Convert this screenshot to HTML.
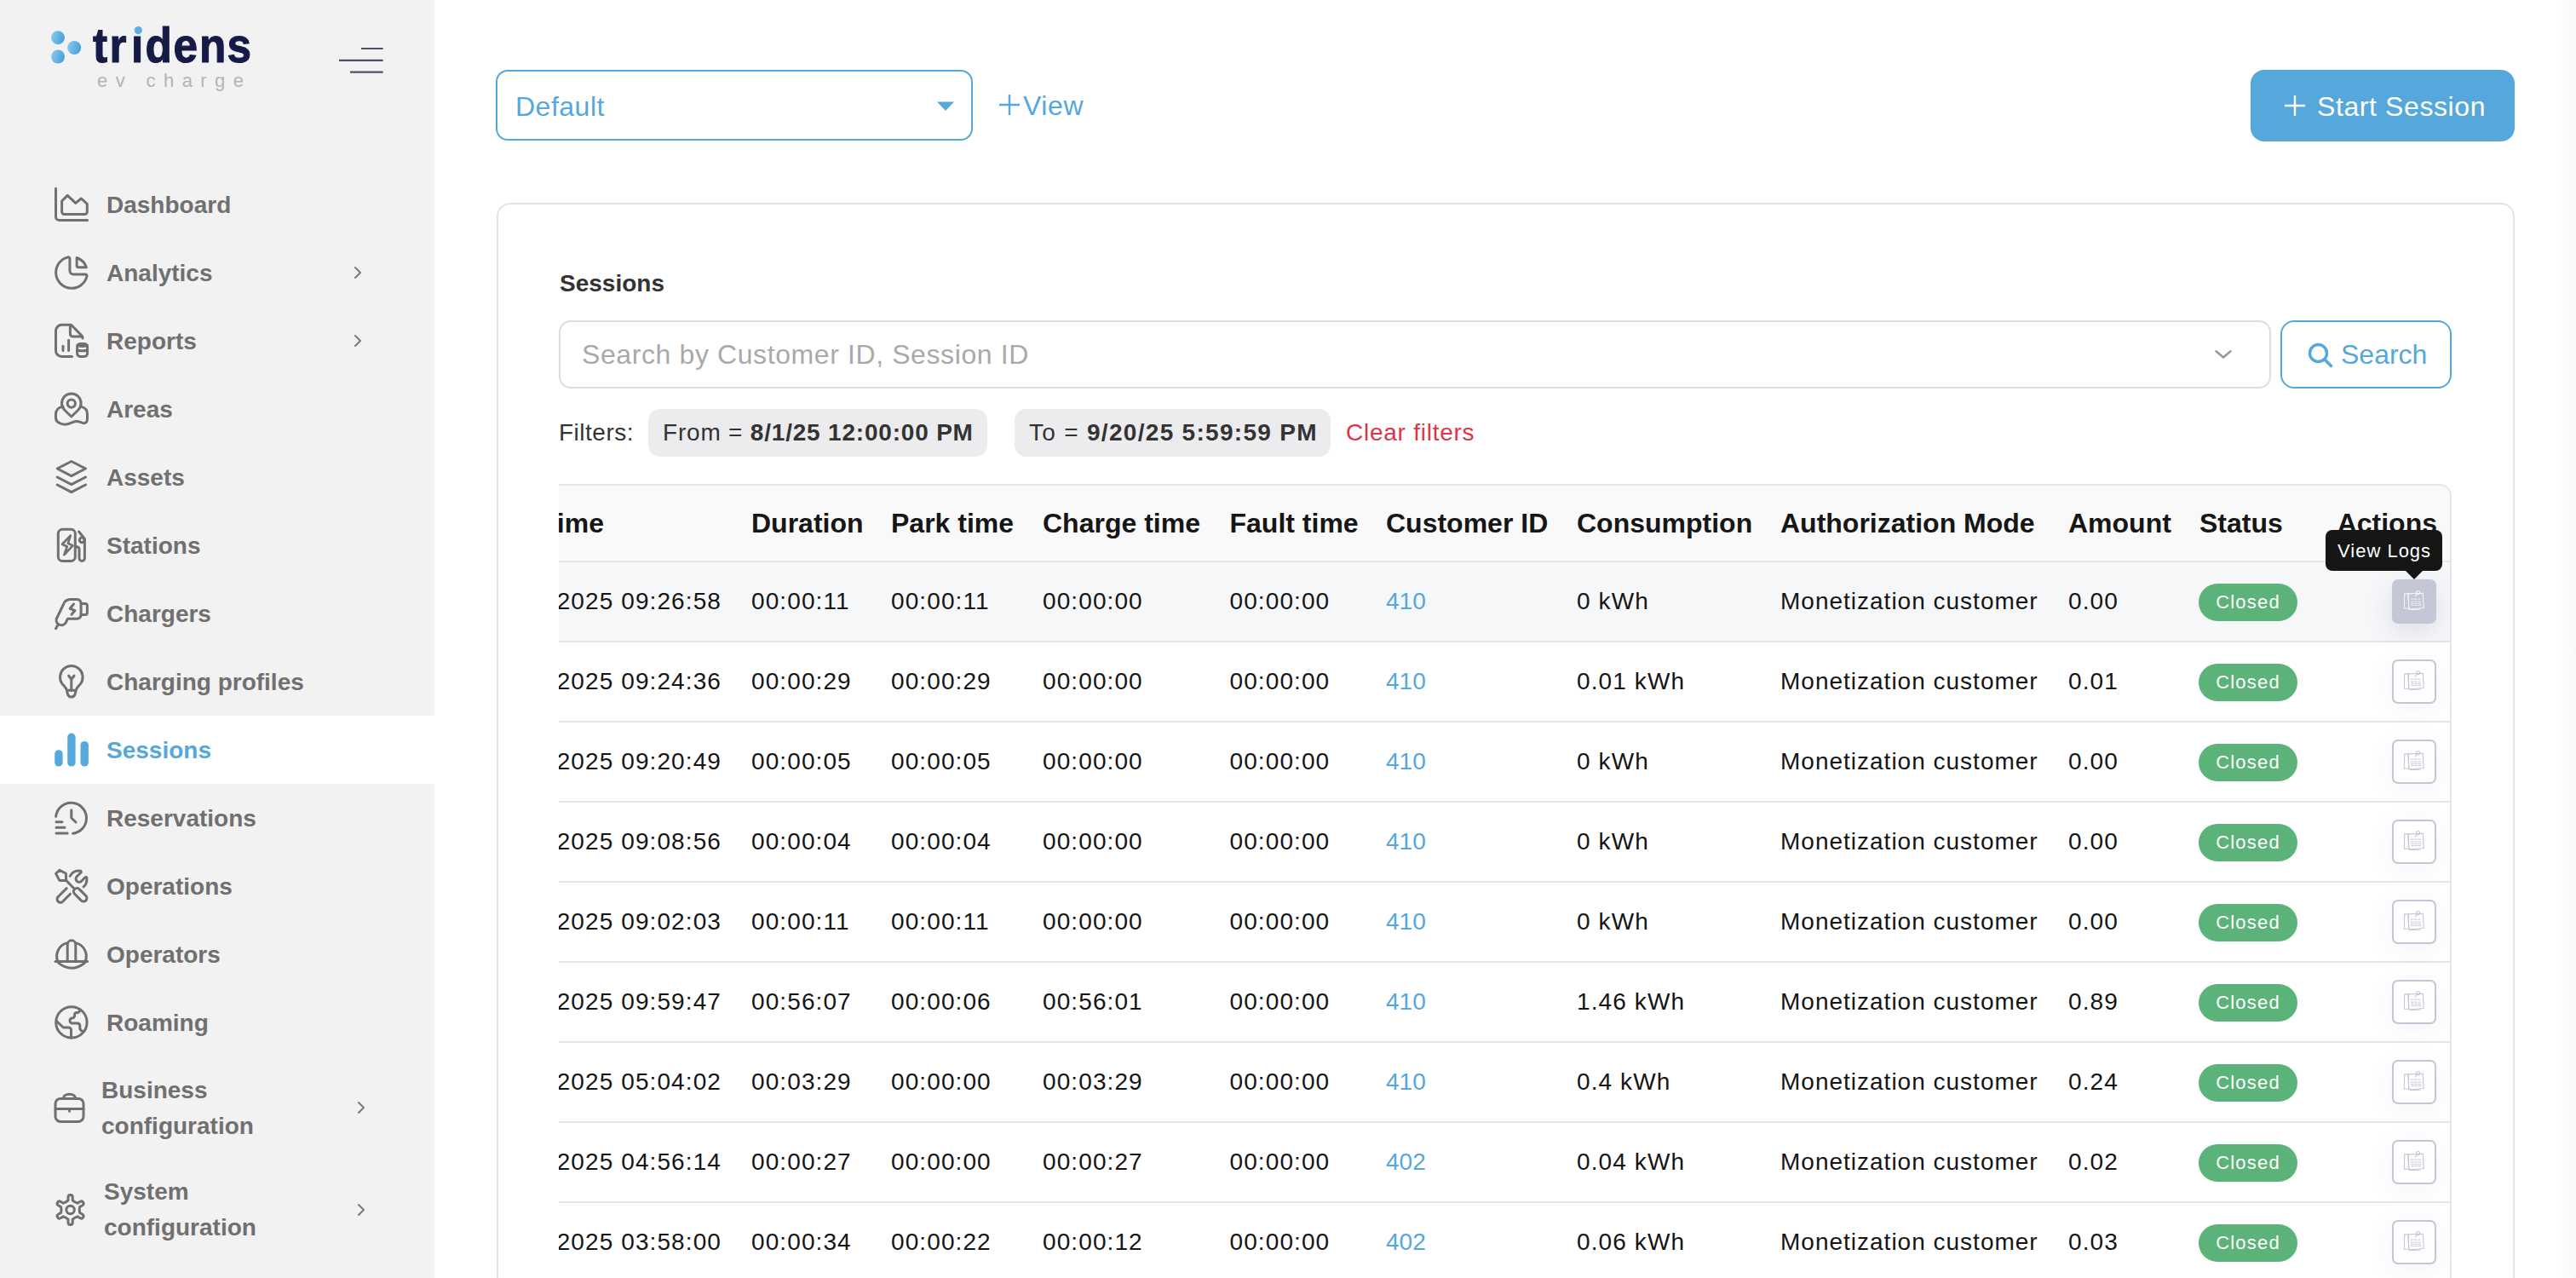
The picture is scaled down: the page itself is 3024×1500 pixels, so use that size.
<!DOCTYPE html><html><head><meta charset="utf-8"><title>Sessions</title><style>
*{margin:0;padding:0;box-sizing:border-box}
html,body{width:3024px;height:1500px;overflow:hidden;background:#fff;font-family:"Liberation Sans", sans-serif}
.t{position:absolute;line-height:1;white-space:nowrap}
.abs{position:absolute}
#side{position:absolute;left:0;top:0;width:510px;height:1500px;background:#f2f2f2}
.nav{color:#707070;font-weight:bold}
.ico{position:absolute;width:48px;height:48px;overflow:visible}
.ico *{fill:none;stroke:#707070;stroke-width:3;stroke-linecap:round;stroke-linejoin:round}
.chev{position:absolute;width:14px;height:20px}
.chev path{fill:none;stroke:#7a7a7a;stroke-width:2;stroke-linecap:round;stroke-linejoin:round}
.row{position:absolute;left:0;width:2221px;height:94px;border-bottom:2px solid #e6e6e9}
.cell{color:#151515;letter-spacing:1.1px}
.badge{position:absolute;width:116px;height:44px;border-radius:22px;background:#5cb37a;color:#fff;font-size:22px;letter-spacing:1.2px;line-height:44px;text-align:center}
.abtn{position:absolute;width:52px;height:52px;border:2px solid #c4c5d7;border-radius:7px;background:#fff;box-shadow:0 6px 30px rgba(60,60,110,0.06)}
</style></head><body>
<div id="side">
<div class="abs" style="left:0;top:840px;width:510px;height:80px;background:#fff"></div>
<svg class="abs" style="left:0;top:0" width="510" height="130" viewBox="0 0 510 130">
<defs><linearGradient id="lg" x1="0" y1="0" x2="1" y2="0.3"><stop offset="0" stop-color="#8fcdf0"/><stop offset="1" stop-color="#4aa2dc"/></linearGradient></defs>
<circle cx="68" cy="44.2" r="8" fill="url(#lg)"/>
<circle cx="87.2" cy="56" r="8" fill="url(#lg)"/>
<circle cx="68" cy="66.5" r="8" fill="url(#lg)"/>
<g transform="scale(0.9,1)"><text x="121.1 142.8 171.1 189.4 226.1 260.0 296.1" y="73.2" font-family="Liberation Sans" font-weight="bold" font-size="57" fill="#151a46" stroke="#151a46" stroke-width="1.1">trıdens</text></g>
<circle id="idot" cx="162.3" cy="35.6" r="4.6" fill="#5ab0e4"/>
<text x="114" y="101.7" font-family="Liberation Sans" font-size="22" textLength="172" lengthAdjust="spacing" fill="#b4b4b4">ev  charge</text>
<path d="M424 57H449.6M398 70.8H449.6M411 84.6H449.6" stroke="#4b5069" stroke-width="2.2" fill="none"/>
</svg>
<svg class="ico" style="left:60px;top:216px" viewBox="0 0 48 48"><path d="M5.5 5.3V38.4a4 4 0 0 0 4 4H42.6"/><path d="M12.6 20L19.2 13.4L28.8 22.4L35.4 17L42.3 23.4V32.6a3 3 0 0 1 -3 3H15.6a3 3 0 0 1 -3 -3Z"/></svg>
<div class="t" style="left:125.0px;top:226.9px;font-size:28px;color:#707070;font-weight:bold">Dashboard</div>
<svg class="ico" style="left:60px;top:296px" viewBox="0 0 48 48"><g transform="translate(-0.6,-0.7) scale(2.05)"><path d="M10 3.2a9 9 0 1 0 10.8 10.8a1 1 0 0 0 -1 -1h-6.8a2 2 0 0 1 -2 -2v-7a.9 .9 0 0 0 -1 -.8" style="stroke-width:1.46"/><path d="M15 3.5a9 9 0 0 1 5.5 5.5h-4.5a1 1 0 0 1 -1 -1v-4.5" style="stroke-width:1.46"/></g></svg>
<div class="t" style="left:125.0px;top:306.9px;font-size:28px;color:#707070;font-weight:bold">Analytics</div>
<svg class="chev" style="left:413px;top:310px" viewBox="0 0 14 20"><path d="M4 4L10 10L4 16"/></svg>
<svg class="ico" style="left:60px;top:376px" viewBox="0 0 48 48"><path d="M24.5 42.4H12.5a7 7 0 0 1 -7 -7V12.3a7 7 0 0 1 7 -7H23.5L36 18a4 4 0 0 1 1 3"/><path d="M22.4 5.6V16a3 3 0 0 0 3 3H36"/><path d="M14 30.2V35.6M20.6 23.2V35.6"/><rect x="30.6" y="27.6" width="12" height="14.8" rx="3.6"/><path d="M30.8 29.4Q36.6 31.6 42.4 29.4M30.6 35Q36.6 36.6 42.6 35"/></svg>
<div class="t" style="left:125.0px;top:386.9px;font-size:28px;color:#707070;font-weight:bold">Reports</div>
<svg class="chev" style="left:413px;top:390px" viewBox="0 0 14 20"><path d="M4 4L10 10L4 16"/></svg>
<svg class="ico" style="left:60px;top:456px" viewBox="0 0 48 48"><circle cx="23.8" cy="17.6" r="4.6"/><path d="M23.8 33L15.8 25.2A11.3 11.3 0 1 1 31.8 25.2Z"/><path d="M14 21.2C8 22 5.5 26 5.5 30V34.5c0 5 6 8 12 7.6c5 -0.5 8 -3.5 12 -3.6c4.5 -0.1 6.5 2.8 10 2.1c2.5 -0.5 3 -3 3 -5.8V30c0 -4 -2.5 -7.5 -7 -8.6"/></svg>
<div class="t" style="left:125.0px;top:466.9px;font-size:28px;color:#707070;font-weight:bold">Areas</div>
<svg class="ico" style="left:60px;top:536px" viewBox="0 0 48 48"><path d="M23.8 5.5L7.2 14L23.8 22.6L40.5 14Z"/><path d="M7.2 24L23.8 32.6L40.5 24"/><path d="M7.2 33L23.8 41.6L40.5 33"/></svg>
<div class="t" style="left:125.0px;top:546.9px;font-size:28px;color:#707070;font-weight:bold">Assets</div>
<svg class="ico" style="left:60px;top:616px" viewBox="0 0 48 48"><rect x="8.3" y="5.3" width="20" height="37.1" rx="5"/><path d="M22.8 12.6L13 22.8L18.8 25.4L15.4 35.2L25.4 24.4L19.8 21.8Z" style="stroke-width:2.7"/><path d="M28.3 25.8H30a3 3 0 0 1 3 3V39.2a3.2 3.2 0 0 0 6.4 0V16.5L32.6 8"/><circle cx="36.2" cy="17.8" r="2.9"/></svg>
<div class="t" style="left:125.0px;top:626.9px;font-size:28px;color:#707070;font-weight:bold">Stations</div>
<svg class="ico" style="left:60px;top:696px" viewBox="0 0 48 48"><path d="M22.6 7.6H30.6a4.5 4.5 0 0 1 4.5 4.5V25.6a4.6 4.6 0 0 1 -4.6 4.6H19.5L17.4 34.5a6 6 0 0 1 -11.2 -4L14.2 14a9 9 0 0 1 8.4 -6.4Z"/><path d="M8 37.2L5.5 41.8"/><path d="M35.1 12.4H40a2.4 2.4 0 0 1 2.4 2.4V23a2.4 2.4 0 0 1 -2.4 2.4H35.1"/><path d="M26.5 13L22.2 18.3L28 20.6L24 25.2"/></svg>
<div class="t" style="left:125.0px;top:706.9px;font-size:28px;color:#707070;font-weight:bold">Chargers</div>
<svg class="ico" style="left:60px;top:776px" viewBox="0 0 48 48"><path d="M18.4 34.2C17.6 31 15 29 13 26.6A13.3 13.3 0 1 1 34.6 26.6C32.6 29 30 31 29.2 34.2Z"/><path d="M18.6 35.4L19.6 39a4.4 4.4 0 0 0 8.4 0L29 35.4"/><path d="M20.6 17.2L23.8 21.2L27 17.2M23.8 21.2V34.2"/></svg>
<div class="t" style="left:125.0px;top:786.9px;font-size:28px;color:#707070;font-weight:bold">Charging profiles</div>
<svg class="abs" width="48" height="48" style="left:60px;top:856px" viewBox="0 0 48 48"><rect x="4.2" y="24.2" width="9.4" height="19.4" rx="4.7" fill="#55a9dc"/><rect x="19.2" y="4.5" width="9.4" height="39.1" rx="4.7" fill="#55a9dc"/><rect x="34.5" y="13.9" width="9.4" height="29.7" rx="4.7" fill="#55a9dc"/></svg>
<div class="t" style="left:125.0px;top:866.9px;font-size:28px;color:#55a7dc;font-weight:bold">Sessions</div>
<svg class="ico" style="left:60px;top:936px" viewBox="0 0 48 48"><path d="M5.6 22.2A18 18 0 1 1 25.6 42.2"/><path d="M23.8 14.8V24L29 29"/><path d="M6 28.7H13M6 35.3H16M6 42H19.2"/></svg>
<div class="t" style="left:125.0px;top:946.9px;font-size:28px;color:#707070;font-weight:bold">Reservations</div>
<svg class="ico" style="left:60px;top:1016px" viewBox="0 0 48 48"><path d="M17.6 17.4L9.8 17.4L5.6 9.4L9.9 5.2L17.4 9.2Z"/><path d="M17.6 17.4L26.4 26.2"/><path d="M27.6 27.6a3.7 3.7 0 0 1 5.2 -0.2L41 35.6a3.9 3.9 0 0 1 -5.5 5.5L27.4 33a3.7 3.7 0 0 1 0.2 -5.4Z"/><path d="M22.2 12.2C25 7.5 30 5.5 34.6 6.2c1 .4 .8 1.4 .2 2l-4.6 4.6a3.8 3.8 0 0 0 5.4 5.4l4.4 -4.4c.6 -.6 1.6 -.5 1.8 .4c.6 4.5 -1.2 8.5 -3.8 10.6"/><path d="M18.2 26.6L8 36.8a3.9 3.9 0 0 0 5.5 5.5L22.5 33.2"/></svg>
<div class="t" style="left:125.0px;top:1026.9px;font-size:28px;color:#707070;font-weight:bold">Operations</div>
<svg class="ico" style="left:60px;top:1096px" viewBox="0 0 48 48"><path d="M5 32.6H42.6"/><path d="M7.6 32A16.2 16.2 0 0 1 19.2 10.6M28.6 10.6A16.2 16.2 0 0 1 40.3 32"/><path d="M19.2 32.4V12.6a4.8 4.8 0 0 1 9.6 0V32.4"/><path d="M8.6 34.2Q23.8 46.4 39.4 34.2"/></svg>
<div class="t" style="left:125.0px;top:1106.9px;font-size:28px;color:#707070;font-weight:bold">Operators</div>
<svg class="ico" style="left:60px;top:1176px" viewBox="0 0 48 48"><circle cx="23.9" cy="23.9" r="18.2"/><path d="M6.2 22.4L14.3 30H20.5a3 3 0 0 1 3 3V42"/><path d="M34.6 9.2L33 11.4a3 3 0 0 1 -2.4 1H30.2a2.6 2.6 0 0 0 -2.6 2.6V16a3.2 3.2 0 0 1 -3 3a3 3 0 0 0 -2.6 3a3 3 0 0 0 3 3H31a3 3 0 0 1 2.8 2.8V31a5 5 0 0 0 3.8 3.6"/></svg>
<div class="t" style="left:125.0px;top:1186.9px;font-size:28px;color:#707070;font-weight:bold">Roaming</div>
<svg class="ico" style="left:60px;top:1276px" viewBox="0 0 48 48"><rect x="5" y="13.4" width="33" height="27" rx="6"/><path d="M14 13.2a7.6 6 0 0 1 15 0"/><path d="M5 25.5H38M21.5 25.5V28.2"/></svg>
<div class="t" style="left:119.0px;top:1265.8px;font-size:28px;color:#707070;font-weight:bold">Business</div>
<div class="t" style="left:119.0px;top:1308.1px;font-size:28px;color:#707070;font-weight:bold">configuration</div>
<svg class="chev" style="left:417px;top:1290px" viewBox="0 0 14 20"><path d="M4 4L10 10L4 16"/></svg>
<svg class="ico" style="left:60px;top:1396px" viewBox="0 0 48 48"><path d="M20.00 12.80L20.00 9.10A2.6 2.6 0 0 1 25.20 9.10L25.20 12.80Q27.70 15.17 31.00 16.15L34.20 14.30A2.6 2.6 0 0 1 36.80 18.80L33.60 20.65Q32.80 24.00 33.60 27.35L36.80 29.20A2.6 2.6 0 0 1 34.20 33.70L31.00 31.85Q27.70 32.83 25.20 35.20L25.20 38.90A2.6 2.6 0 0 1 20.00 38.90L20.00 35.20Q17.50 32.83 14.20 31.85L11.00 33.70A2.6 2.6 0 0 1 8.40 29.20L11.60 27.35Q12.40 24.00 11.60 20.65L8.40 18.80A2.6 2.6 0 0 1 11.00 14.30L14.20 16.15Q17.50 15.17 20.00 12.80Z"/><circle cx="22.6" cy="24" r="4.7"/></svg>
<div class="t" style="left:122.0px;top:1385.1px;font-size:28px;color:#707070;font-weight:bold">System</div>
<div class="t" style="left:122.0px;top:1427.0px;font-size:28px;color:#707070;font-weight:bold">configuration</div>
<svg class="chev" style="left:417px;top:1410px" viewBox="0 0 14 20"><path d="M4 4L10 10L4 16"/></svg>
</div>
<div class="abs" style="left:582px;top:82px;width:560px;height:83px;border:2px solid #55a7dc;border-radius:14px"></div>
<div class="t" style="left:605.0px;top:108.9px;font-size:32px;color:#55a7dc;letter-spacing:0.5px">Default</div>
<svg class="abs" style="left:1098px;top:117px" width="24" height="16" viewBox="0 0 24 16"><path d="M2 2.5H22L12 13Z" fill="#55a7dc"/></svg>
<svg class="abs" style="left:1170px;top:108px" width="30" height="30" viewBox="0 0 30 30"><path d="M15 3V27M3 15H27" stroke="#55a7dc" stroke-width="2.4" fill="none"/></svg>
<div class="t" style="left:1201.0px;top:107.9px;font-size:32px;color:#55a7dc;letter-spacing:0.6px">View</div>
<div class="abs" style="left:2642px;top:82px;width:310px;height:84px;background:#55a7dc;border-radius:16px"></div>
<svg class="abs" style="left:2679px;top:109px" width="30" height="30" viewBox="0 0 30 30"><path d="M15 3V27M3 15H27" stroke="#fff" stroke-width="2.4" fill="none"/></svg>
<div class="t" style="left:2720.0px;top:108.6px;font-size:32px;color:#fff;letter-spacing:0.6px">Start Session</div>
<div class="abs" style="left:583px;top:238px;width:2369px;height:1400px;border:2px solid #e4e4e7;border-radius:16px"></div>
<div class="t" style="left:657.0px;top:318.7px;font-size:28px;color:#333;font-weight:bold">Sessions</div>
<div class="abs" style="left:656px;top:376px;width:2010px;height:80px;border:2px solid #dedede;border-radius:14px"></div>
<div class="t" style="left:683.0px;top:399.9px;font-size:32px;color:#a9a9a9;letter-spacing:0.6px">Search by Customer ID, Session ID</div>
<svg class="abs" style="left:2596px;top:406px" width="28" height="20" viewBox="0 0 28 20"><path d="M5.5 6.3L14 13.6L22.5 6.3" stroke="#9a9a9a" stroke-width="2.6" fill="none" stroke-linecap="round" stroke-linejoin="round"/></svg>
<div class="abs" style="left:2677px;top:376px;width:201px;height:80px;border:2px solid #55a7dc;border-radius:16px"></div>
<svg class="abs" style="left:2706px;top:399px" width="36" height="36" viewBox="0 0 36 36"><circle cx="15.5" cy="15.5" r="10" stroke="#55a7dc" stroke-width="3.4" fill="none"/><path d="M23 23L30.5 30.5" stroke="#55a7dc" stroke-width="3.6" stroke-linecap="round"/></svg>
<div class="t" style="left:2748.0px;top:399.9px;font-size:32px;color:#55a7dc">Search</div>
<div class="t" style="left:656.0px;top:494.3px;font-size:28px;color:#333;letter-spacing:0.5px">Filters:</div>
<div class="abs" style="left:761px;top:480px;width:398px;height:56px;background:#ececee;border-radius:14px"></div>
<div class="t" style="left:778.0px;top:494.3px;font-size:28px;color:#333;letter-spacing:0.8px">From = <b>8/1/25 12:00:00 PM</b></div>
<div class="abs" style="left:1191px;top:480px;width:371px;height:56px;background:#ececee;border-radius:14px"></div>
<div class="t" style="left:1208.0px;top:494.3px;font-size:28px;color:#333;letter-spacing:1.3px">To = <b>9/20/25 5:59:59 PM</b></div>
<div class="t" style="left:1580.0px;top:494.3px;font-size:28px;color:#dc3545;letter-spacing:0.75px">Clear filters</div>
<div class="abs" style="left:656px;top:568px;width:2222px;height:940px;overflow:hidden;border-top:2px solid #e6e6e9;border-right:2px solid #e6e6e9;border-top-right-radius:14px">
<div class="abs" style="left:0;top:0;width:2221px;height:90px;background:#f9f9fa;border-bottom:2px solid #e6e6e9"></div>
<div class="t" style="right:2167.0px;top:27.9px;font-size:32px;color:#161616;font-weight:bold">Start time</div>
<div class="t" style="left:226.0px;top:27.9px;font-size:32px;color:#161616;font-weight:bold">Duration</div>
<div class="t" style="left:390.0px;top:27.9px;font-size:32px;color:#161616;font-weight:bold">Park time</div>
<div class="t" style="left:568.0px;top:27.9px;font-size:32px;color:#161616;font-weight:bold">Charge time</div>
<div class="t" style="left:787.5px;top:27.9px;font-size:32px;color:#161616;font-weight:bold">Fault time</div>
<div class="t" style="left:971.0px;top:27.9px;font-size:32px;color:#161616;font-weight:bold">Customer ID</div>
<div class="t" style="left:1195.0px;top:27.9px;font-size:32px;color:#161616;font-weight:bold">Consumption</div>
<div class="t" style="left:1434.0px;top:27.9px;font-size:32px;color:#161616;font-weight:bold">Authorization Mode</div>
<div class="t" style="left:1772.0px;top:27.9px;font-size:32px;color:#161616;font-weight:bold">Amount</div>
<div class="t" style="left:1926.0px;top:27.9px;font-size:32px;color:#161616;font-weight:bold">Status</div>
<div class="t" style="right:15.0px;top:27.9px;font-size:32px;color:#161616;font-weight:bold">Actions</div>
<div class="row" style="top:90px;background:#f6f7f9"></div>
<div class="t" style="right:2029.0px;top:122.1px;font-size:28px;color:#151515;letter-spacing:1.1px">19/09/2025 09:26:58</div>
<div class="t" style="left:226.0px;top:122.1px;font-size:28px;color:#151515;letter-spacing:1.1px">00:00:11</div>
<div class="t" style="left:390.0px;top:122.1px;font-size:28px;color:#151515;letter-spacing:1.1px">00:00:11</div>
<div class="t" style="left:568.0px;top:122.1px;font-size:28px;color:#151515;letter-spacing:1.1px">00:00:00</div>
<div class="t" style="left:787.5px;top:122.1px;font-size:28px;color:#151515;letter-spacing:1.1px">00:00:00</div>
<div class="t" style="left:971.0px;top:122.1px;font-size:28px;color:#55a7dc;letter-spacing:0px">410</div>
<div class="t" style="left:1195.0px;top:122.1px;font-size:28px;color:#151515;letter-spacing:1.1px">0 kWh</div>
<div class="t" style="left:1434.0px;top:122.1px;font-size:28px;color:#151515;letter-spacing:1px">Monetization customer</div>
<div class="t" style="left:1772.0px;top:122.1px;font-size:28px;color:#151515;letter-spacing:1.1px">0.00</div>
<div class="badge" style="left:1925px;top:114.7px">Closed</div>
<div class="abtn" style="left:2152px;top:110px;background:#c5c6d6;border-color:#c5c6d6;box-shadow:0 10px 30px rgba(60,60,110,0.12)"><svg class="abs" style="left:-2px;top:-2px" width="52" height="52" viewBox="0 0 52 52"><g fill="none" stroke="#f4f4f8" stroke-width="1.1" stroke-linejoin="round" stroke-linecap="round"><path d="M14.7 16.9L19 16.7L19.6 34.2L14.4 34.1Z"/><path d="M19 16.9L36.3 16.3L37.2 33.5L20 35Z"/><path d="M21 35.4L33 35.2"/><circle cx="30.6" cy="15.6" r="2.1"/><path d="M27 20L29.3 17.6"/><path d="M22.2 23.1H34M22.4 26.1H34.2M22.6 28.4H34.3M22.8 30.6H33.8" stroke-dasharray="2.6 1.6" stroke-width="1"/></g></svg></div>
<div class="row" style="top:184px;background:#fff"></div>
<div class="t" style="right:2029.0px;top:216.1px;font-size:28px;color:#151515;letter-spacing:1.1px">19/09/2025 09:24:36</div>
<div class="t" style="left:226.0px;top:216.1px;font-size:28px;color:#151515;letter-spacing:1.1px">00:00:29</div>
<div class="t" style="left:390.0px;top:216.1px;font-size:28px;color:#151515;letter-spacing:1.1px">00:00:29</div>
<div class="t" style="left:568.0px;top:216.1px;font-size:28px;color:#151515;letter-spacing:1.1px">00:00:00</div>
<div class="t" style="left:787.5px;top:216.1px;font-size:28px;color:#151515;letter-spacing:1.1px">00:00:00</div>
<div class="t" style="left:971.0px;top:216.1px;font-size:28px;color:#55a7dc;letter-spacing:0px">410</div>
<div class="t" style="left:1195.0px;top:216.1px;font-size:28px;color:#151515;letter-spacing:1.1px">0.01 kWh</div>
<div class="t" style="left:1434.0px;top:216.1px;font-size:28px;color:#151515;letter-spacing:1px">Monetization customer</div>
<div class="t" style="left:1772.0px;top:216.1px;font-size:28px;color:#151515;letter-spacing:1.1px">0.01</div>
<div class="badge" style="left:1925px;top:208.7px">Closed</div>
<div class="abtn" style="left:2152px;top:204px"><svg class="abs" style="left:-2px;top:-2px" width="52" height="52" viewBox="0 0 52 52"><g fill="none" stroke="#c4c5d7" stroke-width="1.1" stroke-linejoin="round" stroke-linecap="round"><path d="M14.7 16.9L19 16.7L19.6 34.2L14.4 34.1Z"/><path d="M19 16.9L36.3 16.3L37.2 33.5L20 35Z"/><path d="M21 35.4L33 35.2"/><circle cx="30.6" cy="15.6" r="2.1"/><path d="M27 20L29.3 17.6"/><path d="M22.2 23.1H34M22.4 26.1H34.2M22.6 28.4H34.3M22.8 30.6H33.8" stroke-dasharray="2.6 1.6" stroke-width="1"/></g></svg></div>
<div class="row" style="top:278px;background:#fff"></div>
<div class="t" style="right:2029.0px;top:310.1px;font-size:28px;color:#151515;letter-spacing:1.1px">19/09/2025 09:20:49</div>
<div class="t" style="left:226.0px;top:310.1px;font-size:28px;color:#151515;letter-spacing:1.1px">00:00:05</div>
<div class="t" style="left:390.0px;top:310.1px;font-size:28px;color:#151515;letter-spacing:1.1px">00:00:05</div>
<div class="t" style="left:568.0px;top:310.1px;font-size:28px;color:#151515;letter-spacing:1.1px">00:00:00</div>
<div class="t" style="left:787.5px;top:310.1px;font-size:28px;color:#151515;letter-spacing:1.1px">00:00:00</div>
<div class="t" style="left:971.0px;top:310.1px;font-size:28px;color:#55a7dc;letter-spacing:0px">410</div>
<div class="t" style="left:1195.0px;top:310.1px;font-size:28px;color:#151515;letter-spacing:1.1px">0 kWh</div>
<div class="t" style="left:1434.0px;top:310.1px;font-size:28px;color:#151515;letter-spacing:1px">Monetization customer</div>
<div class="t" style="left:1772.0px;top:310.1px;font-size:28px;color:#151515;letter-spacing:1.1px">0.00</div>
<div class="badge" style="left:1925px;top:302.7px">Closed</div>
<div class="abtn" style="left:2152px;top:298px"><svg class="abs" style="left:-2px;top:-2px" width="52" height="52" viewBox="0 0 52 52"><g fill="none" stroke="#c4c5d7" stroke-width="1.1" stroke-linejoin="round" stroke-linecap="round"><path d="M14.7 16.9L19 16.7L19.6 34.2L14.4 34.1Z"/><path d="M19 16.9L36.3 16.3L37.2 33.5L20 35Z"/><path d="M21 35.4L33 35.2"/><circle cx="30.6" cy="15.6" r="2.1"/><path d="M27 20L29.3 17.6"/><path d="M22.2 23.1H34M22.4 26.1H34.2M22.6 28.4H34.3M22.8 30.6H33.8" stroke-dasharray="2.6 1.6" stroke-width="1"/></g></svg></div>
<div class="row" style="top:372px;background:#fff"></div>
<div class="t" style="right:2029.0px;top:404.1px;font-size:28px;color:#151515;letter-spacing:1.1px">19/09/2025 09:08:56</div>
<div class="t" style="left:226.0px;top:404.1px;font-size:28px;color:#151515;letter-spacing:1.1px">00:00:04</div>
<div class="t" style="left:390.0px;top:404.1px;font-size:28px;color:#151515;letter-spacing:1.1px">00:00:04</div>
<div class="t" style="left:568.0px;top:404.1px;font-size:28px;color:#151515;letter-spacing:1.1px">00:00:00</div>
<div class="t" style="left:787.5px;top:404.1px;font-size:28px;color:#151515;letter-spacing:1.1px">00:00:00</div>
<div class="t" style="left:971.0px;top:404.1px;font-size:28px;color:#55a7dc;letter-spacing:0px">410</div>
<div class="t" style="left:1195.0px;top:404.1px;font-size:28px;color:#151515;letter-spacing:1.1px">0 kWh</div>
<div class="t" style="left:1434.0px;top:404.1px;font-size:28px;color:#151515;letter-spacing:1px">Monetization customer</div>
<div class="t" style="left:1772.0px;top:404.1px;font-size:28px;color:#151515;letter-spacing:1.1px">0.00</div>
<div class="badge" style="left:1925px;top:396.7px">Closed</div>
<div class="abtn" style="left:2152px;top:392px"><svg class="abs" style="left:-2px;top:-2px" width="52" height="52" viewBox="0 0 52 52"><g fill="none" stroke="#c4c5d7" stroke-width="1.1" stroke-linejoin="round" stroke-linecap="round"><path d="M14.7 16.9L19 16.7L19.6 34.2L14.4 34.1Z"/><path d="M19 16.9L36.3 16.3L37.2 33.5L20 35Z"/><path d="M21 35.4L33 35.2"/><circle cx="30.6" cy="15.6" r="2.1"/><path d="M27 20L29.3 17.6"/><path d="M22.2 23.1H34M22.4 26.1H34.2M22.6 28.4H34.3M22.8 30.6H33.8" stroke-dasharray="2.6 1.6" stroke-width="1"/></g></svg></div>
<div class="row" style="top:466px;background:#fff"></div>
<div class="t" style="right:2029.0px;top:498.1px;font-size:28px;color:#151515;letter-spacing:1.1px">19/09/2025 09:02:03</div>
<div class="t" style="left:226.0px;top:498.1px;font-size:28px;color:#151515;letter-spacing:1.1px">00:00:11</div>
<div class="t" style="left:390.0px;top:498.1px;font-size:28px;color:#151515;letter-spacing:1.1px">00:00:11</div>
<div class="t" style="left:568.0px;top:498.1px;font-size:28px;color:#151515;letter-spacing:1.1px">00:00:00</div>
<div class="t" style="left:787.5px;top:498.1px;font-size:28px;color:#151515;letter-spacing:1.1px">00:00:00</div>
<div class="t" style="left:971.0px;top:498.1px;font-size:28px;color:#55a7dc;letter-spacing:0px">410</div>
<div class="t" style="left:1195.0px;top:498.1px;font-size:28px;color:#151515;letter-spacing:1.1px">0 kWh</div>
<div class="t" style="left:1434.0px;top:498.1px;font-size:28px;color:#151515;letter-spacing:1px">Monetization customer</div>
<div class="t" style="left:1772.0px;top:498.1px;font-size:28px;color:#151515;letter-spacing:1.1px">0.00</div>
<div class="badge" style="left:1925px;top:490.7px">Closed</div>
<div class="abtn" style="left:2152px;top:486px"><svg class="abs" style="left:-2px;top:-2px" width="52" height="52" viewBox="0 0 52 52"><g fill="none" stroke="#c4c5d7" stroke-width="1.1" stroke-linejoin="round" stroke-linecap="round"><path d="M14.7 16.9L19 16.7L19.6 34.2L14.4 34.1Z"/><path d="M19 16.9L36.3 16.3L37.2 33.5L20 35Z"/><path d="M21 35.4L33 35.2"/><circle cx="30.6" cy="15.6" r="2.1"/><path d="M27 20L29.3 17.6"/><path d="M22.2 23.1H34M22.4 26.1H34.2M22.6 28.4H34.3M22.8 30.6H33.8" stroke-dasharray="2.6 1.6" stroke-width="1"/></g></svg></div>
<div class="row" style="top:560px;background:#fff"></div>
<div class="t" style="right:2029.0px;top:592.1px;font-size:28px;color:#151515;letter-spacing:1.1px">19/09/2025 09:59:47</div>
<div class="t" style="left:226.0px;top:592.1px;font-size:28px;color:#151515;letter-spacing:1.1px">00:56:07</div>
<div class="t" style="left:390.0px;top:592.1px;font-size:28px;color:#151515;letter-spacing:1.1px">00:00:06</div>
<div class="t" style="left:568.0px;top:592.1px;font-size:28px;color:#151515;letter-spacing:1.1px">00:56:01</div>
<div class="t" style="left:787.5px;top:592.1px;font-size:28px;color:#151515;letter-spacing:1.1px">00:00:00</div>
<div class="t" style="left:971.0px;top:592.1px;font-size:28px;color:#55a7dc;letter-spacing:0px">410</div>
<div class="t" style="left:1195.0px;top:592.1px;font-size:28px;color:#151515;letter-spacing:1.1px">1.46 kWh</div>
<div class="t" style="left:1434.0px;top:592.1px;font-size:28px;color:#151515;letter-spacing:1px">Monetization customer</div>
<div class="t" style="left:1772.0px;top:592.1px;font-size:28px;color:#151515;letter-spacing:1.1px">0.89</div>
<div class="badge" style="left:1925px;top:584.7px">Closed</div>
<div class="abtn" style="left:2152px;top:580px"><svg class="abs" style="left:-2px;top:-2px" width="52" height="52" viewBox="0 0 52 52"><g fill="none" stroke="#c4c5d7" stroke-width="1.1" stroke-linejoin="round" stroke-linecap="round"><path d="M14.7 16.9L19 16.7L19.6 34.2L14.4 34.1Z"/><path d="M19 16.9L36.3 16.3L37.2 33.5L20 35Z"/><path d="M21 35.4L33 35.2"/><circle cx="30.6" cy="15.6" r="2.1"/><path d="M27 20L29.3 17.6"/><path d="M22.2 23.1H34M22.4 26.1H34.2M22.6 28.4H34.3M22.8 30.6H33.8" stroke-dasharray="2.6 1.6" stroke-width="1"/></g></svg></div>
<div class="row" style="top:654px;background:#fff"></div>
<div class="t" style="right:2029.0px;top:686.1px;font-size:28px;color:#151515;letter-spacing:1.1px">19/09/2025 05:04:02</div>
<div class="t" style="left:226.0px;top:686.1px;font-size:28px;color:#151515;letter-spacing:1.1px">00:03:29</div>
<div class="t" style="left:390.0px;top:686.1px;font-size:28px;color:#151515;letter-spacing:1.1px">00:00:00</div>
<div class="t" style="left:568.0px;top:686.1px;font-size:28px;color:#151515;letter-spacing:1.1px">00:03:29</div>
<div class="t" style="left:787.5px;top:686.1px;font-size:28px;color:#151515;letter-spacing:1.1px">00:00:00</div>
<div class="t" style="left:971.0px;top:686.1px;font-size:28px;color:#55a7dc;letter-spacing:0px">410</div>
<div class="t" style="left:1195.0px;top:686.1px;font-size:28px;color:#151515;letter-spacing:1.1px">0.4 kWh</div>
<div class="t" style="left:1434.0px;top:686.1px;font-size:28px;color:#151515;letter-spacing:1px">Monetization customer</div>
<div class="t" style="left:1772.0px;top:686.1px;font-size:28px;color:#151515;letter-spacing:1.1px">0.24</div>
<div class="badge" style="left:1925px;top:678.7px">Closed</div>
<div class="abtn" style="left:2152px;top:674px"><svg class="abs" style="left:-2px;top:-2px" width="52" height="52" viewBox="0 0 52 52"><g fill="none" stroke="#c4c5d7" stroke-width="1.1" stroke-linejoin="round" stroke-linecap="round"><path d="M14.7 16.9L19 16.7L19.6 34.2L14.4 34.1Z"/><path d="M19 16.9L36.3 16.3L37.2 33.5L20 35Z"/><path d="M21 35.4L33 35.2"/><circle cx="30.6" cy="15.6" r="2.1"/><path d="M27 20L29.3 17.6"/><path d="M22.2 23.1H34M22.4 26.1H34.2M22.6 28.4H34.3M22.8 30.6H33.8" stroke-dasharray="2.6 1.6" stroke-width="1"/></g></svg></div>
<div class="row" style="top:748px;background:#fff"></div>
<div class="t" style="right:2029.0px;top:780.1px;font-size:28px;color:#151515;letter-spacing:1.1px">19/09/2025 04:56:14</div>
<div class="t" style="left:226.0px;top:780.1px;font-size:28px;color:#151515;letter-spacing:1.1px">00:00:27</div>
<div class="t" style="left:390.0px;top:780.1px;font-size:28px;color:#151515;letter-spacing:1.1px">00:00:00</div>
<div class="t" style="left:568.0px;top:780.1px;font-size:28px;color:#151515;letter-spacing:1.1px">00:00:27</div>
<div class="t" style="left:787.5px;top:780.1px;font-size:28px;color:#151515;letter-spacing:1.1px">00:00:00</div>
<div class="t" style="left:971.0px;top:780.1px;font-size:28px;color:#55a7dc;letter-spacing:0px">402</div>
<div class="t" style="left:1195.0px;top:780.1px;font-size:28px;color:#151515;letter-spacing:1.1px">0.04 kWh</div>
<div class="t" style="left:1434.0px;top:780.1px;font-size:28px;color:#151515;letter-spacing:1px">Monetization customer</div>
<div class="t" style="left:1772.0px;top:780.1px;font-size:28px;color:#151515;letter-spacing:1.1px">0.02</div>
<div class="badge" style="left:1925px;top:772.7px">Closed</div>
<div class="abtn" style="left:2152px;top:768px"><svg class="abs" style="left:-2px;top:-2px" width="52" height="52" viewBox="0 0 52 52"><g fill="none" stroke="#c4c5d7" stroke-width="1.1" stroke-linejoin="round" stroke-linecap="round"><path d="M14.7 16.9L19 16.7L19.6 34.2L14.4 34.1Z"/><path d="M19 16.9L36.3 16.3L37.2 33.5L20 35Z"/><path d="M21 35.4L33 35.2"/><circle cx="30.6" cy="15.6" r="2.1"/><path d="M27 20L29.3 17.6"/><path d="M22.2 23.1H34M22.4 26.1H34.2M22.6 28.4H34.3M22.8 30.6H33.8" stroke-dasharray="2.6 1.6" stroke-width="1"/></g></svg></div>
<div class="row" style="top:842px;background:#fff"></div>
<div class="t" style="right:2029.0px;top:874.1px;font-size:28px;color:#151515;letter-spacing:1.1px">19/09/2025 03:58:00</div>
<div class="t" style="left:226.0px;top:874.1px;font-size:28px;color:#151515;letter-spacing:1.1px">00:00:34</div>
<div class="t" style="left:390.0px;top:874.1px;font-size:28px;color:#151515;letter-spacing:1.1px">00:00:22</div>
<div class="t" style="left:568.0px;top:874.1px;font-size:28px;color:#151515;letter-spacing:1.1px">00:00:12</div>
<div class="t" style="left:787.5px;top:874.1px;font-size:28px;color:#151515;letter-spacing:1.1px">00:00:00</div>
<div class="t" style="left:971.0px;top:874.1px;font-size:28px;color:#55a7dc;letter-spacing:0px">402</div>
<div class="t" style="left:1195.0px;top:874.1px;font-size:28px;color:#151515;letter-spacing:1.1px">0.06 kWh</div>
<div class="t" style="left:1434.0px;top:874.1px;font-size:28px;color:#151515;letter-spacing:1px">Monetization customer</div>
<div class="t" style="left:1772.0px;top:874.1px;font-size:28px;color:#151515;letter-spacing:1.1px">0.03</div>
<div class="badge" style="left:1925px;top:866.7px">Closed</div>
<div class="abtn" style="left:2152px;top:862px"><svg class="abs" style="left:-2px;top:-2px" width="52" height="52" viewBox="0 0 52 52"><g fill="none" stroke="#c4c5d7" stroke-width="1.1" stroke-linejoin="round" stroke-linecap="round"><path d="M14.7 16.9L19 16.7L19.6 34.2L14.4 34.1Z"/><path d="M19 16.9L36.3 16.3L37.2 33.5L20 35Z"/><path d="M21 35.4L33 35.2"/><circle cx="30.6" cy="15.6" r="2.1"/><path d="M27 20L29.3 17.6"/><path d="M22.2 23.1H34M22.4 26.1H34.2M22.6 28.4H34.3M22.8 30.6H33.8" stroke-dasharray="2.6 1.6" stroke-width="1"/></g></svg></div>
</div>
<div class="abs" style="left:2730px;top:622px;width:137px;height:48px;background:#161616;border-radius:8px"></div>
<svg class="abs" style="left:2822px;top:668px" width="24" height="13" viewBox="0 0 24 13"><path d="M0 0H24L12 12Z" fill="#161616"/></svg>
<div class="t" style="left:2744.0px;top:635.8px;font-size:22px;color:#fff;letter-spacing:1px">View Logs</div>
<div class="abs" style="left:3004px;top:0;width:20px;height:1500px;background:linear-gradient(90deg,rgba(0,0,0,0),rgba(0,0,0,0.025))"></div>
<script>(function(){var s=window.innerWidth/3024;if(s>0&&Math.abs(s-1)>0.01){document.documentElement.style.zoom=s;}})();</script>
</body></html>
